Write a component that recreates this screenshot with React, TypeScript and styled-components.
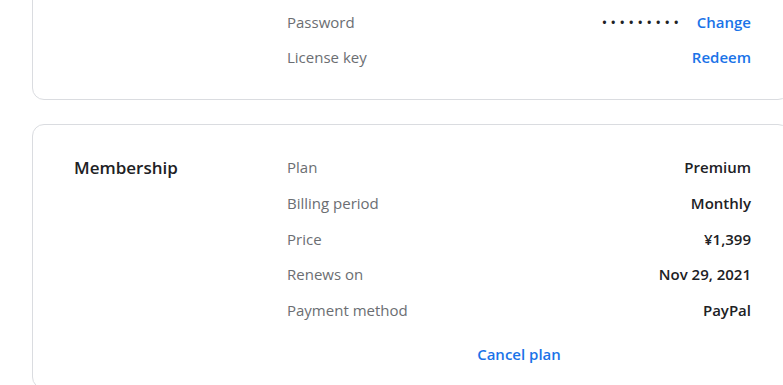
import React from 'react';
import styled, { createGlobalStyle } from 'styled-components';

const GlobalStyle = createGlobalStyle`
  html, body {
    margin: 0;
    padding: 0;
    background: #ffffff;
    overflow: hidden;
  }
  body {
    font-family: 'Open Sans', 'Liberation Sans', sans-serif;
    color: #202124;
  }
`;

const Page = styled.div`
  display: flex;
  flex-direction: column;
  gap: 24px;
  width: 758px;
  margin: -57px 0 0 32px;
`;

const Card = styled.section`
  display: grid;
  grid-template-columns: 213px 1fr;
  padding: 24px 38px 24px 41px;
  border: 1px solid #dadce0;
  border-radius: 12px;
  background: #fff;
`;

const Title = styled.h2`
  margin: 0;
  height: 35.75px;
  display: flex;
  align-items: center;
  font-size: 17px;
  font-weight: 600;
  color: #202124;
`;

const Rows = styled.div`
  display: flex;
  flex-direction: column;
`;

const Row = styled.div`
  display: flex;
  align-items: center;
  justify-content: space-between;
  height: 35.75px;
  font-size: 15px;
`;

const Label = styled.span`
  color: #6b6e72;
`;

const Value = styled.span`
  display: flex;
  align-items: center;
  gap: 14px;
  font-weight: 600;
  color: #202124;
`;

const Dots = styled.span`
  font-size: 13px;
  letter-spacing: 4.1px;
  color: #202124;
`;

const Link = styled.a<{ $center?: boolean }>`
  color: #1a73e8;
  font-weight: 600;
  font-size: 15px;
  text-decoration: none;
  cursor: pointer;
  ${({ $center }) => ($center ? 'align-self: center; margin-top: 16px;' : '')}
`;

type Item = { label: string; value: React.ReactNode };

const membership: Item[] = [
  { label: 'Plan', value: 'Premium' },
  { label: 'Billing period', value: 'Monthly' },
  { label: 'Price', value: '¥1,399' },
  { label: 'Renews on', value: 'Nov 29, 2021' },
  { label: 'Payment method', value: 'PayPal' },
];

export default function App() {
  return (
    <>
      <GlobalStyle />
      <Page>
        <Card>
          <Title>Account</Title>
          <Rows>
            <Row>
              <Label>Email</Label>
              <Value>user@example.com</Value>
            </Row>
            <Row>
              <Label>Password</Label>
              <Value>
                <Dots>•••••••••</Dots>
                <Link>Change</Link>
              </Value>
            </Row>
            <Row>
              <Label>License key</Label>
              <Link>Redeem</Link>
            </Row>
          </Rows>
        </Card>
        <Card>
          <Title>Membership</Title>
          <Rows>
            {membership.map((m) => (
              <Row key={m.label}>
                <Label>{m.label}</Label>
                <Value>{m.value}</Value>
              </Row>
            ))}
            <Link $center>Cancel plan</Link>
          </Rows>
        </Card>
      </Page>
    </>
  );
}
